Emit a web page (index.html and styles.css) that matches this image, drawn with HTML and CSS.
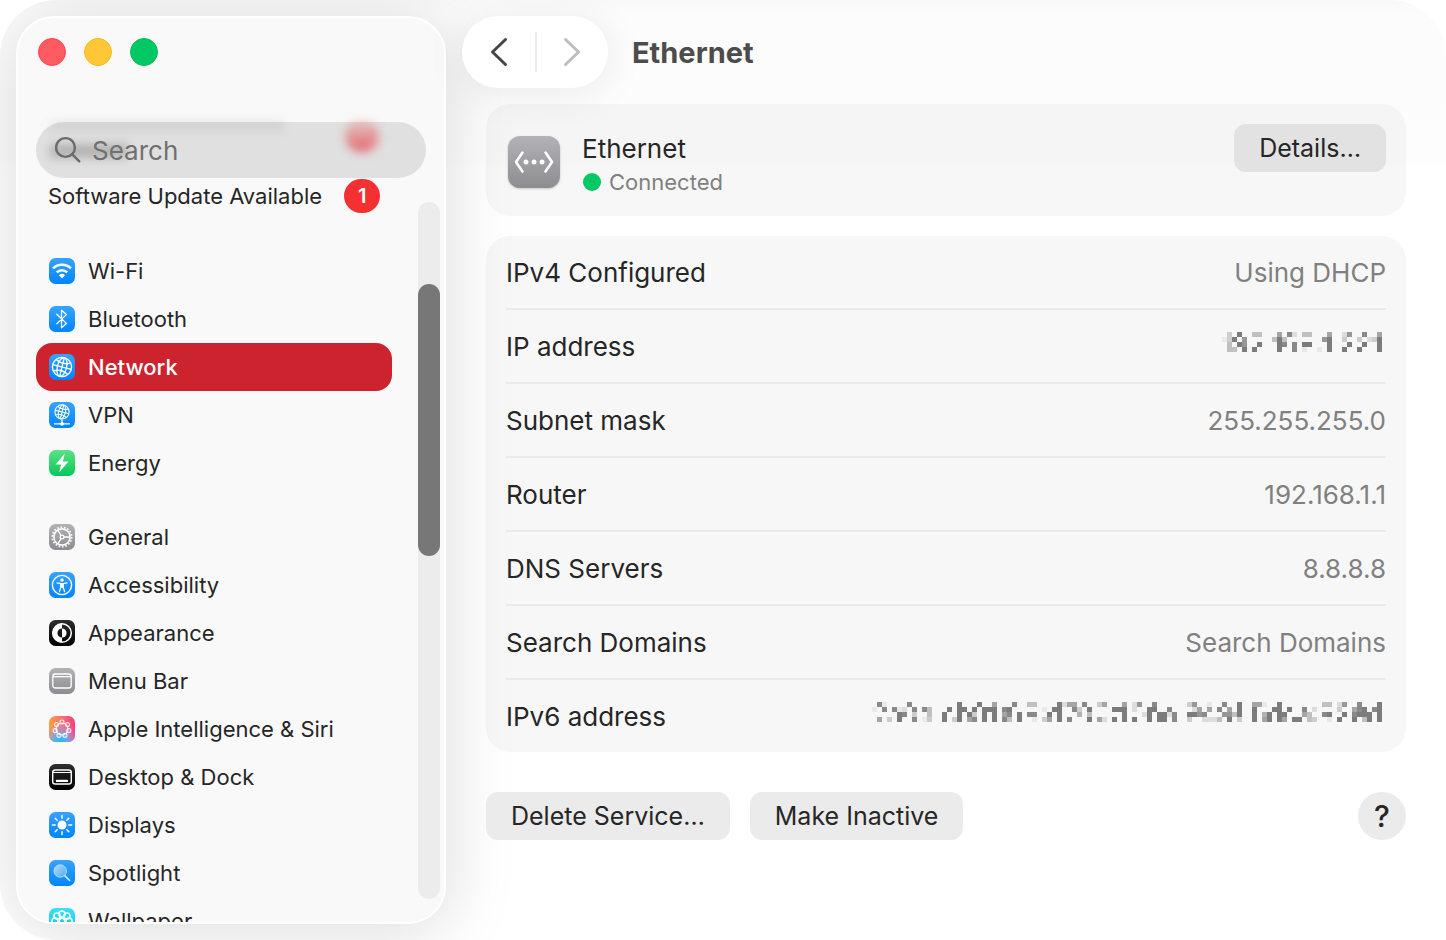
FILE: index.html
```html
<!DOCTYPE html>
<html lang="en">
<head>
<meta charset="utf-8">
<title>Ethernet</title>
<link rel="stylesheet" href="styles.css">
</head>
<body>
<svg class="defs" width="0" height="0" aria-hidden="true">
  <defs>
    <linearGradient id="blue" x1="0" y1="0" x2="0" y2="1"><stop offset="0" stop-color="#38a3ff"/><stop offset="1" stop-color="#0085ff"/></linearGradient>
    <linearGradient id="green" x1="0" y1="0" x2="0" y2="1"><stop offset="0" stop-color="#5fe087"/><stop offset="1" stop-color="#04c95a"/></linearGradient>
    <linearGradient id="gray" x1="0" y1="0" x2="0" y2="1"><stop offset="0" stop-color="#b2b2b7"/><stop offset="1" stop-color="#8c8c91"/></linearGradient>
    <linearGradient id="black" x1="0" y1="0" x2="0" y2="1"><stop offset="0" stop-color="#2e2e2e"/><stop offset="1" stop-color="#000"/></linearGradient>
    <linearGradient id="cyan" x1="0" y1="0" x2="0" y2="1"><stop offset="0" stop-color="#3de0fa"/><stop offset="1" stop-color="#05c0e8"/></linearGradient>
    <linearGradient id="siri" x1="0" y1="0" x2="1" y2="0"><stop offset="0" stop-color="#ffa02e"/><stop offset=".5" stop-color="#ff6f7c"/><stop offset="1" stop-color="#fb3b78"/></linearGradient>
    <radialGradient id="siriBlue" cx=".45" cy="1" r=".75"><stop offset="0" stop-color="#12bdf8"/><stop offset=".35" stop-color="#58b2f5" stop-opacity=".9"/><stop offset="1" stop-color="#b98bf0" stop-opacity="0"/></radialGradient>
    <linearGradient id="lens" x1="0" y1="0" x2="1" y2="1"><stop offset="0" stop-color="#b5dcff"/><stop offset="1" stop-color="#4ba9fb"/></linearGradient>
    <g id="globe" fill="none" stroke="#fff">
      <circle cx="13" cy="13" r="9.6"/>
      <g transform="rotate(14 13 13)"><ellipse cx="13" cy="13" rx="4.6" ry="9.6"/><path d="M13 3.4v19.2M3.4 13h19.2M5.6 7.2q7.4 4 14.8 0M5.6 18.800q7.400-4 14.800 0"/></g>
    </g>
  </defs>
</svg>
<div class="window">
  <aside class="sidebar">
    <div class="lights">
      <button class="light close" aria-label="Close"></button>
      <button class="light minimize" aria-label="Minimize"></button>
      <button class="light zoom" aria-label="Zoom"></button>
    </div>
    <label class="search">
      <span class="smudge-line" aria-hidden="true"></span>
      <span class="smudge-word" aria-hidden="true"></span>
      <span class="smudge-badge" aria-hidden="true"></span>
      <svg class="search-icon" viewBox="0 0 28 28" aria-hidden="true"><circle cx="11.500" cy="11.500" r="9.400"/><path d="M18.300 18.300l7 7"/></svg>
      <input type="text" placeholder="Search" aria-label="Search">
    </label>
    <div class="list">
      <a class="update" href="#update">Software Update Available <span class="badge">1</span></a>
      <nav class="group" aria-label="Connections">
        <a class="item" href="#wifi"><svg class="icon" viewBox="0 0 26 26"><rect width="26" height="26" rx="6.500" fill="url(#blue)"/><path d="M4.100 10.400a12.600 12.600 0 0 1 17.800 0M7.800 14.400a7.400 7.400 0 0 1 10.400 0" fill="none" stroke="#fff" stroke-width="2.600"/><path d="M13 20.400l-3-3.100a4.300 4.300 0 0 1 6 0z" fill="#fff"/></svg>Wi-Fi</a>
        <a class="item" href="#bluetooth"><svg class="icon" viewBox="0 0 26 26"><rect width="26" height="26" rx="6.500" fill="url(#blue)"/><path d="M7.800 8.300l9.600 9.100-4.900 4.400V4.200l4.900 4.400-9.600 9.100" fill="none" stroke="#fff" stroke-width="1.300" stroke-linejoin="round" stroke-linecap="round"/></svg>Bluetooth</a>
        <a class="item selected" href="#network" aria-current="page"><svg class="icon" viewBox="0 0 26 26"><rect width="26" height="26" rx="6.500" fill="url(#blue)"/><use href="#globe" stroke-width="1.300"/></svg>Network</a>
        <a class="item" href="#vpn"><svg class="icon" viewBox="0 0 26 26"><rect width="26" height="26" rx="6.500" fill="url(#blue)"/><use href="#globe" transform="translate(3.400 .3) scale(.74)" stroke-width="1.400"/><path d="M13 17.500v4M5 21.800h16" stroke="#fff" stroke-width="1.300"/><circle cx="13" cy="21.800" r="1.900" fill="#fff"/></svg>VPN</a>
        <a class="item" href="#energy"><svg class="icon" viewBox="0 0 26 26"><rect width="26" height="26" rx="6.500" fill="url(#green)"/><path d="M15.800 3.600L6.600 14.400h5.500l-2 8.200 9.300-11h-5.600z" fill="#fff"/></svg>Energy</a>
      </nav>
      <nav class="group" aria-label="System">
        <a class="item" href="#general"><svg class="icon" viewBox="0 0 26 26"><rect width="26" height="26" rx="6.500" fill="url(#gray)"/><g fill="none" stroke="#fff"><circle cx="13" cy="13" r="9.700" stroke-width="1.700" stroke-dasharray="1.600 1.786"/><circle cx="13" cy="13" r="8.100" stroke-width="1.600"/><circle cx="13" cy="13" r="1.900" stroke-width="1.200"/><path d="M15 13h6M12 11.300L8.800 6M12 14.700L8.800 20" stroke-width="1.300"/></g></svg>General</a>
        <a class="item" href="#accessibility"><svg class="icon" viewBox="0 0 26 26"><rect width="26" height="26" rx="6.500" fill="url(#blue)"/><circle cx="13" cy="13" r="9.600" fill="none" stroke="#fff" stroke-width="1.400"/><circle cx="13" cy="8" r="1.700" fill="#fff"/><path d="M8 10.900l3.800.7h2.400l3.800-.7M11.900 12v3l-1.500 4.600M14.100 12v3l1.500 4.600" fill="none" stroke="#fff" stroke-width="1.300" stroke-linecap="round"/><path d="M11.300 11.300h3.400v4.400h-3.400z" fill="#fff"/></svg>Accessibility</a>
        <a class="item" href="#appearance"><svg class="icon" viewBox="0 0 26 26"><rect width="26" height="26" rx="6.500" fill="url(#black)"/><circle cx="13" cy="13" r="9.300" fill="none" stroke="#fff" stroke-width="1.500"/><path d="M13 3.400a9.600 9.600 0 0 0 0 19.200v-5a4.600 4.600 0 0 1 0-9.200z" fill="#fff"/><path d="M13 8.400a4.600 4.600 0 0 1 0 9.200z" fill="#fff"/></svg>Appearance</a>
        <a class="item" href="#menubar"><svg class="icon" viewBox="0 0 26 26"><rect width="26" height="26" rx="6.500" fill="url(#gray)"/><rect x="3.800" y="6" width="18.400" height="14" rx="2.600" fill="none" stroke="#fff" stroke-width="1.300"/><path d="M4 8.700h18" stroke="#fff" stroke-width="1.300"/></svg>Menu Bar</a>
        <a class="item" href="#siri"><svg class="icon" viewBox="0 0 26 26"><rect width="26" height="26" rx="6.500" fill="url(#siri)"/><rect width="26" height="26" rx="6.500" fill="url(#siriBlue)"/><g fill="none" stroke="#fff" stroke-width="1.150" stroke-opacity=".85"><circle cx="13" cy="13" r="6"/><circle cx="13" cy="6" r="2"/><circle cx="18.500" cy="8.600" r="2"/><circle cx="19.800" cy="14.600" r="2"/><circle cx="16" cy="19.300" r="2"/><circle cx="10" cy="19.300" r="2"/><circle cx="6.200" cy="14.600" r="2"/><circle cx="7.500" cy="8.600" r="2"/></g></svg>Apple Intelligence &amp; Siri</a>
        <a class="item" href="#desktop"><svg class="icon" viewBox="0 0 26 26"><rect width="26" height="26" rx="6.500" fill="url(#black)"/><rect x="3.700" y="6" width="18.600" height="14" rx="2.600" fill="none" stroke="#fff" stroke-width="1.400"/><path d="M4 8.500h18" stroke="#fff" stroke-width="1"/><rect x="7" y="15.700" width="12" height="2.400" rx=".6" fill="#fff"/></svg>Desktop &amp; Dock</a>
        <a class="item" href="#displays"><svg class="icon" viewBox="0 0 26 26"><rect width="26" height="26" rx="6.500" fill="url(#blue)"/><circle cx="13" cy="13" r="4.500" fill="#fff"/><path d="M13 6.200V3.400M13 19.800v2.800M6.200 13H3.400M19.800 13h2.800M8.200 8.200l-2-2M17.800 8.200l2-2M8.200 17.800l-2 2M17.800 17.800l2 2" stroke="#fff" stroke-width="1.500" stroke-linecap="round"/></svg>Displays</a>
        <a class="item" href="#spotlight"><svg class="icon" viewBox="0 0 26 26"><rect width="26" height="26" rx="6.500" fill="url(#blue)"/><circle cx="11.200" cy="11" r="6.200" fill="url(#lens)" stroke="#b5dcff" stroke-width="1"/><path d="M16 15.800l4.600 4.700" stroke="#d6ecff" stroke-width="1.700" stroke-linecap="round"/></svg>Spotlight</a>
        <a class="item" href="#wallpaper"><svg class="icon" viewBox="0 0 26 26"><rect width="26" height="26" rx="6.500" fill="url(#cyan)"/><g fill="none" stroke="#fff" stroke-width="1.600"><circle cx="13" cy="13" r="2.800"/><circle cx="13" cy="6" r="3"/><circle cx="18" cy="8" r="3"/><circle cx="20" cy="13" r="3"/><circle cx="18" cy="18" r="3"/><circle cx="13" cy="20" r="3"/><circle cx="8" cy="18" r="3"/><circle cx="6" cy="13" r="3"/><circle cx="8" cy="8" r="3"/></g></svg>Wallpaper</a>
      </nav>
    </div>
    <div class="track"><div class="thumb"></div></div>
  </aside>
  <main class="main">
    <header class="toolbar">
      <div class="history">
        <button aria-label="Back"><svg viewBox="0 0 18 30"><path d="M15.500 2.500L2.500 15l13 12.500"/></svg></button>
        <button aria-label="Forward" disabled><svg viewBox="0 0 18 30"><path d="M2.500 2.500L15.500 15l-13 12.500"/></svg></button>
      </div>
      <h1>Ethernet</h1>
    </header>
    <div class="content">
      <section class="card service">
        <svg class="service-icon" viewBox="0 0 52 52" aria-hidden="true"><rect width="52" height="52" rx="12" fill="url(#gray)"/><path d="M14.500 16.500L8 26l6.500 9.500M37.500 16.500L44 26l-6.500 9.500" fill="none" stroke="#fff" stroke-width="2.600" stroke-linecap="round" stroke-linejoin="round"/><g fill="#fff"><circle cx="18" cy="26" r="2.500"/><circle cx="26" cy="26" r="2.500"/><circle cx="34" cy="26" r="2.500"/></g></svg>
        <div class="service-text"><h2>Ethernet</h2><p><span class="dot"></span>Connected</p></div>
        <button class="btn details">Details…</button>
      </section>
      <dl class="card rows">
        <div><dt>IPv4 Configured</dt><dd>Using DHCP</dd></div>
        <div><dt>IP address</dt><dd><svg class="mosaic" id="ipv4" role="img" aria-label="Hidden"></svg></dd></div>
        <div><dt>Subnet mask</dt><dd>255.255.255.0</dd></div>
        <div><dt>Router</dt><dd>192.168.1.1</dd></div>
        <div><dt>DNS Servers</dt><dd>8.8.8.8</dd></div>
        <div><dt>Search Domains</dt><dd>Search Domains</dd></div>
        <div><dt>IPv6 address</dt><dd><svg class="mosaic" id="ipv6" role="img" aria-label="Hidden"></svg></dd></div>
      </dl>
      <footer class="actions">
        <button class="btn">Delete Service…</button>
        <button class="btn">Make Inactive</button>
        <button class="help" aria-label="Help">?</button>
      </footer>
    </div>
  </main>
</div>
<script src="mosaic.js"></script>
</body>
</html>
```
FILE: mosaic.js
```js
// Each row lists its filled cells as column:shade, shade 1 (faint) to 9 (dark).
const CELL = 5;
const mosaics = {
  ipv4: { columns: 32, rows: [
    "1:3 3:9 6:4 7:4 11:6 13:8 14:2 16:4 17:4 21:6 24:2 25:7 28:8 31:6",
    "0:1 1:3 2:9 4:7 10:4 11:9 12:4 20:7 21:9 24:3 27:3 29:2 30:3 31:9",
    "1:4 3:9 4:7 7:9 11:9 12:8 14:8 16:9 17:9 21:9 25:9 28:9 31:9",
    "1:4 2:4 4:9 6:9 11:9 14:8 16:1 19:1 21:9 24:9 27:9 31:9"
  ] },
  ipv6: { columns: 102, rows: [
    "1:8 2:1 7:8 17:9 21:9 24:6 28:8 31:4 32:4 37:9 38:2 39:6 40:6 42:8 45:3 46:6 50:6 52:2 53:7 56:8 63:3 64:7 67:1 70:8 73:9 76:6 77:6 78:1 81:9 90:4 91:4 93:2 94:7 97:8 101:9",
    "0:1 2:8 4:8 5:1 6:2 8:8 10:8 11:4 15:9 17:9 18:9 20:9 22:9 23:9 24:9 26:8 27:9 34:1 36:9 37:9 40:8 41:3 43:9 48:9 49:9 50:9 52:2 55:9 56:9 59:8 64:2 65:6 67:6 69:8 71:6 73:9 76:9 80:9 81:9 83:9 86:8 88:2 93:3 96:6 97:8 98:9 100:8 101:9",
    "5:9 6:8 8:3 11:4 14:9 17:9 19:9 20:3 22:9 24:9 26:6 27:8 29:9 31:8 32:8 35:9 37:9 41:5 43:4 50:9 54:2 55:9 57:9 58:9 59:2 60:8 63:9 64:9 65:7 66:8 70:7 71:7 72:4 73:9 76:9 78:5 79:9 81:9 82:9 86:6 87:4 90:8 91:9 94:9 96:8 97:9 98:9 99:9 101:9",
    "1:6 3:3 5:9 8:8 10:1 11:3 14:9 16:3 17:9 19:6 20:8 22:9 24:9 26:8 27:4 29:9 32:1 34:3 35:6 37:9 39:8 43:9 45:6 46:2 48:9 50:9 52:9 55:9 57:9 58:9 60:8 63:3 66:2 67:2 68:2 69:4 71:9 73:3 76:9 78:6 79:9 81:9 82:6 84:9 85:9 87:4 88:3 91:1 93:9 96:9 98:4 99:9 101:9"
  ] }
};

for (const [id, { columns, rows }] of Object.entries(mosaics)) {
  const svg = document.getElementById(id);
  svg.setAttribute("width", columns * CELL);
  svg.setAttribute("height", rows.length * CELL);
  rows.forEach((row, y) => {
    for (const cell of row.split(" ")) {
      const [x, shade] = cell.split(":").map(Number);
      const rect = document.createElementNS("http://www.w3.org/2000/svg", "rect");
      rect.setAttribute("x", x * CELL);
      rect.setAttribute("y", y * CELL);
      rect.setAttribute("width", CELL);
      rect.setAttribute("height", CELL);
      rect.setAttribute("fill-opacity", shade / 9);
      svg.append(rect);
    }
  });
}
```
FILE: styles.css
```css
* { box-sizing: border-box; }
body { margin: 0; background: #fff; color: #262626; font-family: Inter, "Liberation Sans", sans-serif; font-size: 26px; }
button { border: 0; padding: 0; font: inherit; color: inherit; }
a { color: inherit; text-decoration: none; }
h1, h2, p, dl, dd { margin: 0; }
.defs { position: absolute; }

.window {
  display: grid;
  grid-template-columns: 430px 1fr;
  height: 100vh;
  padding: 16px 0 16px 16px;
  border-radius: 56px;
  background: linear-gradient(to bottom, #f9f9f9 0, #fcfcfc 16px, #fdfdfd 160px, #fff 170px);
  overflow: hidden;
}

.sidebar {
  position: relative;
  display: flex;
  flex-direction: column;
  min-height: 0;
  padding: 20px 18px 0;
  border: 2px solid #fff;
  border-radius: 38px;
  background: #f9f9f9;
  box-shadow: 0 6px 70px rgba(0, 0, 0, .15);
}
.lights { display: flex; gap: 18px; padding-left: 2px; }
.light { width: 28px; height: 28px; border-radius: 50%; border: 1px solid; }
.close { background: #ff5b61; border-color: #f8404b; }
.minimize { background: #ffc636; border-color: #f7b91c; }
.zoom { background: #00c864; border-color: #00bc58; }

.search {
  position: relative;
  display: flex;
  flex: none;
  align-items: center;
  gap: 10px;
  height: 56px;
  margin-top: 56px;
  padding: 0 18px;
  border-radius: 28px;
  background: #e0e0e0;
}
.search-icon { position: relative; flex: none; width: 28px; height: 28px; fill: none; stroke: #6b6b6b; stroke-width: 2.400; stroke-linecap: round; }
.search input { position: relative; width: 100%; min-width: 0; border: 0; padding: 0; outline: 0; background: none; font: inherit; }
.search input::placeholder { color: #707070; opacity: 1; }
.smudge-line, .smudge-word, .smudge-badge { position: absolute; filter: blur(5px); }
.smudge-line { left: 14px; top: -2px; width: 234px; height: 12px; background: rgba(0, 0, 0, .06); }
.smudge-word { left: 14px; top: 22px; width: 78px; height: 14px; background: rgba(0, 0, 0, .2); }
.smudge-badge { left: 309px; top: -2px; width: 34px; height: 32px; border-radius: 17px; background: linear-gradient(rgba(240, 60, 60, .15), rgba(228, 80, 84, .85)); }

.list { flex: 1; min-height: 0; overflow: hidden; font-size: 22px; }
.update { display: flex; align-items: center; height: 36px; padding-left: 12px; gap: 22px; }
.badge { display: grid; place-items: center; width: 36px; height: 34px; border-radius: 17px; background: #f53033; color: #fff; font-size: 20px; font-weight: 600; }
.group { padding-right: 34px; margin-bottom: 26px; }
.update + .group { margin-top: 33px; }
.item { display: flex; align-items: center; gap: 13px; height: 48px; padding-left: 13px; border-radius: 16px; }
.icon { width: 26px; height: 26px; flex: none; }
.selected { background: #cc232f; color: #fff; font-weight: 500; }
.track { position: absolute; top: 184px; right: 4px; bottom: 23px; width: 22px; border-radius: 11px; background: #ececec; }
.thumb { height: 272px; margin-top: 82px; border-radius: 11px; background: #777; }

.main { position: relative; display: flex; flex-direction: column; min-width: 0; }
.toolbar { display: flex; align-items: center; gap: 24px; padding-left: 16px; }
.history { display: flex; width: 146px; height: 72px; border-radius: 36px; background: #fff; box-shadow: 0 4px 40px rgba(0, 0, 0, .08); }
.history button { display: grid; place-items: center; flex: 1; background: none; color: #454545; }
.history button + button { color: #bdbdbd; }
.history button + button { background: linear-gradient(#ececec, #ececec) left center / 2px 40px no-repeat; }
.history svg { width: 18px; height: 30px; fill: none; stroke: currentColor; stroke-width: 3; stroke-linecap: round; stroke-linejoin: round; }
h1 { font-size: 29px; font-weight: 700; color: #4c4c4c; }

.content { padding: 16px 40px 0; }
.card { border-radius: 24px; background: rgba(0, 0, 0, .032); }
.service { display: flex; height: 112px; padding: 20px 20px 0 22px; }
.service-icon { width: 52px; height: 52px; margin-top: 12px; filter: drop-shadow(0 1px 1px rgba(0, 0, 0, .2)); }
.service-text { flex: 1; margin: 8px 0 0 22px; }
h2 { font-size: 26px; line-height: 34px; font-weight: 400; }
.service-text p { display: flex; align-items: center; gap: 8px; padding-left: 1px; font-size: 22px; line-height: 32px; color: #808080; }
.dot { width: 18px; height: 18px; border-radius: 50%; background: #00c864; }
.btn { height: 48px; padding: 0 25px; border-radius: 12px; background: #ebebeb; font-size: 25px; }
.details { background: #e2e2e2; }
.rows { margin-top: 20px; padding: 0 20px; }
.rows div { display: flex; align-items: center; justify-content: space-between; height: 74px; border-bottom: 2px solid #e9e9e9; }
.rows div:last-child { height: 72px; border: 0; }
dd { color: #808080; }
.mosaic { display: block; margin: 0 4px 8px 0; fill: #7c7c7c; shape-rendering: crispEdges; }
.actions { display: flex; gap: 20px; margin-top: 40px; }
.help { width: 48px; height: 48px; margin-left: auto; border-radius: 50%; background: #ebebeb; font-size: 30px; font-weight: 500; }
```
